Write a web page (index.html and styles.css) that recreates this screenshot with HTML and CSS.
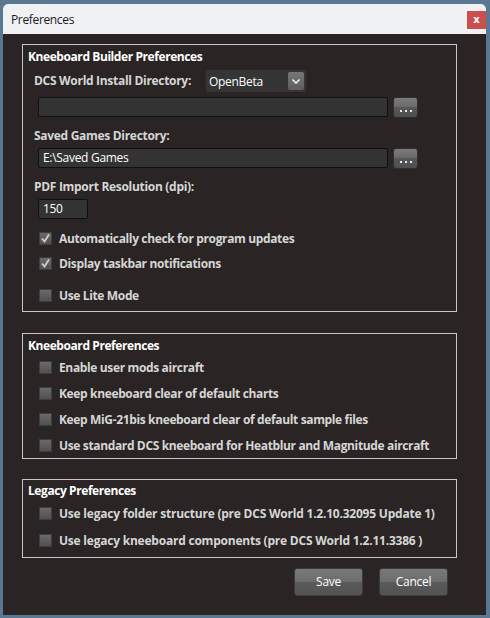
FILE: index.html
```html
<!DOCTYPE html>
<html>
<head>
<meta charset="utf-8">
<link rel="stylesheet" href="styles.css">
</head>
<body>
<div class="window">
  <div class="titlebar">
    <span class="title">Preferences</span>
    <span class="close">x</span>
  </div>
  <div class="content">
    <div class="group g1">
      <div class="gtitle">Kneeboard Builder Preferences</div>
      <div class="row dcs">
        <span class="label dcs-label">DCS World Install Directory:</span>
        <div class="combo">
          <span class="combo-text">OpenBeta</span>
          <span class="arrow"><svg width="16" height="18" viewBox="0 0 16 18"><path d="M4.5 7.5 L8 11 L11.5 7.5" fill="none" stroke="#eeeeee" stroke-width="1.6"/></svg></span>
        </div>
      </div>
      <div class="pathrow p1">
        <div class="input wide"></div>
        <div class="browse"><svg width="23" height="19" viewBox="0 0 23 19"><rect x="6" y="12" width="2" height="2" fill="#e8e4f4"/><rect x="11" y="12" width="2" height="2" fill="#e8e4f4"/><rect x="16" y="12" width="2" height="2" fill="#e8e4f4"/></svg></div>
      </div>
      <div class="label block l2">Saved Games Directory:</div>
      <div class="pathrow p2">
        <div class="input wide">E:\Saved Games</div>
        <div class="browse"><svg width="23" height="19" viewBox="0 0 23 19"><rect x="6" y="12" width="2" height="2" fill="#e8e4f4"/><rect x="11" y="12" width="2" height="2" fill="#e8e4f4"/><rect x="16" y="12" width="2" height="2" fill="#e8e4f4"/></svg></div>
      </div>
      <div class="label block l3">PDF Import Resolution (dpi):</div>
      <div class="pathrow p3">
        <div class="input small">150</div>
      </div>
      <div class="check c1 on"><span class="box"><svg width="13" height="13" viewBox="0 0 13 13"><path d="M3 6.5 L5.5 9.5 L10 2.5" fill="none" stroke="#cfcfcf" stroke-width="1.8"/></svg></span><span class="ctext">Automatically check for program updates</span></div>
      <div class="check c2 on"><span class="box"><svg width="13" height="13" viewBox="0 0 13 13"><path d="M3 6.5 L5.5 9.5 L10 2.5" fill="none" stroke="#cfcfcf" stroke-width="1.8"/></svg></span><span class="ctext">Display taskbar notifications</span></div>
      <div class="check c3"><span class="box"></span><span class="ctext">Use Lite Mode</span></div>
    </div>

    <div class="group g2">
      <div class="gtitle">Kneeboard Preferences</div>
      <div class="check k1"><span class="box"></span><span class="ctext">Enable user mods aircraft</span></div>
      <div class="check k2"><span class="box"></span><span class="ctext">Keep kneeboard clear of default charts</span></div>
      <div class="check k2"><span class="box"></span><span class="ctext">Keep MiG-21bis kneeboard clear of default sample files</span></div>
      <div class="check k2"><span class="box"></span><span class="ctext">Use standard DCS kneeboard for Heatblur and Magnitude aircraft</span></div>
    </div>

    <div class="group g3">
      <div class="gtitle">Legacy Preferences</div>
      <div class="check m1"><span class="box"></span><span class="ctext">Use legacy folder structure (pre DCS World 1.2.10.32095 Update 1)</span></div>
      <div class="check m2"><span class="box"></span><span class="ctext">Use legacy kneeboard components (pre DCS World 1.2.11.3386 )</span></div>
    </div>

    <div class="buttons">
      <div class="btn">Save</div>
      <div class="btn">Cancel</div>
    </div>
  </div>
</div>
</body>
</html>
```

FILE: styles.css
```css
html, body {
  margin: 0;
  padding: 0;
}
body {
  background: #5b7892;
  font-family: "Open Sans", "Noto Sans", sans-serif;
  letter-spacing: -0.3px;
  width: 490px;
  height: 618px;
  overflow: hidden;
}
.window {
  margin: 4px 0 0 3px;
  width: 483px;
  height: 611px;
  background: #2a2524;
  border-radius: 5px 5px 0 0;
  overflow: hidden;
}
.titlebar {
  height: 30px;
  background: #f0f1f3;
  display: flex;
  justify-content: space-between;
  align-items: flex-start;
}
.title {
  font-size: 12px;
  line-height: 14px;
  color: #1b1b1b;
  margin: 9px 0 0 8px;
  letter-spacing: -0.35px;
}
.close {
  width: 19px;
  height: 18px;
  margin: 7px 0 0 0;
  background: #c9504f;
  color: #ffffff;
  font-family: "DejaVu Sans", sans-serif;
  font-weight: bold;
  font-size: 10px;
  line-height: 18px;
  text-align: center;
  letter-spacing: 0;
}
.content {
  padding: 10px 0 0 19px;
}
.group {
  width: 433px;
  border: 1px solid #c8c8c8;
}
.gtitle {
  color: #ffffff;
  font-weight: 700;
  font-size: 12px;
  line-height: 16px;
  padding-left: 5px;
  letter-spacing: -0.42px;
}
.label {
  color: #d6d6d6;
  font-weight: 700;
  font-size: 12px;
  line-height: 16px;
  letter-spacing: -0.3px;
}
.block {
  padding-left: 11px;
}
.g1 {
  height: 266px;
}
.g1 .gtitle {
  margin-top: 4px;
}
.row.dcs {
  display: flex;
  align-items: center;
  margin-top: 5px;
  padding-left: 11px;
  height: 22px;
}
.dcs-label {
  width: 172px;
}
.combo {
  width: 100px;
  height: 22px;
  background: #353535;
  border-radius: 2px;
  display: flex;
  align-items: center;
  justify-content: space-between;
}
.combo-text {
  color: #ffffff;
  font-size: 12px;
  padding-left: 3px;
}
.arrow {
  width: 16px;
  height: 18px;
  margin-right: 2px;
  background: linear-gradient(#767676, #5e5e5e);
  border-radius: 2px;
  display: flex;
}
.pathrow {
  display: flex;
  align-items: flex-start;
  padding-left: 15px;
  height: 20px;
}
.p1 { margin-top: 5px; }
.p2 { margin-top: 4px; }
.p3 { margin-top: 4px; }
.l2 { margin-top: 11px; }
.l3 { margin-top: 11px; }
.input {
  box-sizing: border-box;
  height: 20px;
  background: #333333;
  border: 1px solid #101010;
  border-radius: 2px;
  color: #ffffff;
  font-size: 12px;
  line-height: 18px;
  padding-left: 4px;
}
.input.wide { width: 350px; }
.input.small { width: 50px; }
.browse {
  width: 23px;
  height: 19px;
  margin: 1px 0 0 6px;
  border-radius: 2px;
  background: linear-gradient(#7c7c7c 0%, #6a6a6a 45%, #575757 50%, #4e4e4e 100%);
  box-shadow: 0 0 0 1px #2f2f2f;
  display: flex;
}
.check {
  display: flex;
  align-items: center;
  height: 16px;
  padding-left: 16px;
}
.box {
  box-sizing: border-box;
  width: 13px;
  height: 13px;
  background: linear-gradient(#6a6a6a, #505050);
  border: 1px solid #3e3e3e;
  display: flex;
  flex: none;
}
.box svg {
  margin: -1px;
}
.ctext {
  color: #d6d6d6;
  font-weight: 700;
  font-size: 12px;
  margin-left: 7px;
  white-space: nowrap;
  letter-spacing: -0.36px;
}
.c1 { margin-top: 11px; }
.c2 { margin-top: 9px; }
.c3 { margin-top: 16px; }
.g2 {
  margin-top: 21px;
  height: 124px;
}
.g2 .gtitle { margin-top: 4px; }
.k1 { margin-top: 5px; }
.k2 { margin-top: 10px; }
.g3 {
  margin-top: 20px;
  height: 77px;
}
.g3 .gtitle { margin-top: 3px; }
.m1 { margin-top: 6px; }
.m2 { margin-top: 11px; }
.g3 .ctext { letter-spacing: -0.22px; }
.buttons {
  width: 426px;
  display: flex;
  justify-content: flex-end;
  gap: 16px;
  margin-top: 10px;
}
.btn {
  box-sizing: border-box;
  width: 69px;
  height: 28px;
  border: 1px solid #3a3a3a;
  border-radius: 3px;
  background: linear-gradient(#7a7a7a 0%, #6c6c6c 48%, #5a5a5a 52%, #525252 100%);
  color: #ffffff;
  font-size: 12px;
  line-height: 26px;
  text-align: center;
}
```
